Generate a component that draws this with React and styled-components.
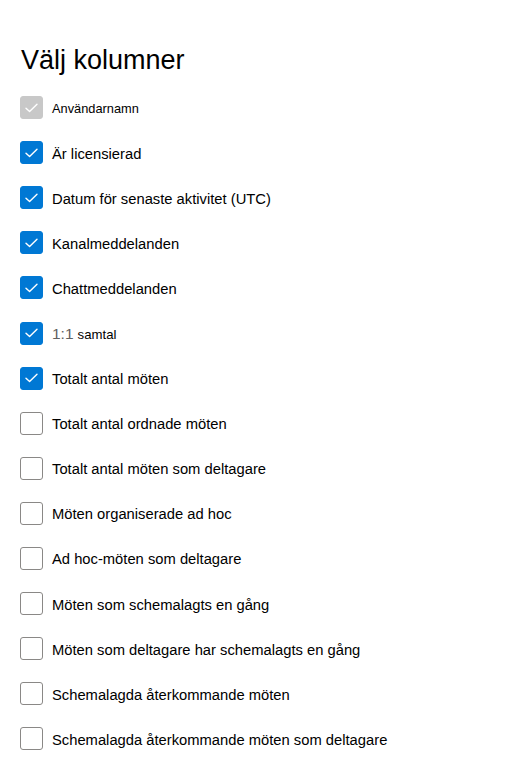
import React from "react";
import styled, { createGlobalStyle } from "styled-components";

const Global = createGlobalStyle`
  html, body { margin: 0; padding: 0; background: #ffffff; }
  body { font-family: "Liberation Sans", Arial, sans-serif; color: #000; }
`;

const Panel = styled.div`
  padding: 44px 0 0 20px;
  display: flex;
  flex-direction: column;
`;

const Title = styled.h1`
  margin: 0 0 9px 1px;
  font-size: 27px;
  line-height: 32px;
  font-weight: 400;
  color: #000;
`;

const List = styled.div`
  display: flex;
  flex-direction: column;
`;

const Row = styled.label`
  height: 45.1px;
  display: flex;
  align-items: center;
  gap: 9px;
`;

const Box = styled.span`
  width: 23px;
  height: 23px;
  box-sizing: border-box;
  border-radius: 3px;
  display: flex;
  align-items: center;
  justify-content: center;
  flex-shrink: 0;
  background: ${(p) => (p.$state === "disabled" ? "#c8c8c8" : p.$state === "on" ? "#0078d4" : "#fff")};
  border: 1px solid ${(p) => (p.$state === "disabled" ? "#c8c8c8" : p.$state === "on" ? "#0078d4" : "#8a8886")};
`;

const Label = styled.span`
  font-size: ${(p) => (p.$small ? "12.8px" : "14.75px")};
  color: #000;
  white-space: nowrap;
  padding-top: 2px;
`;

const Grey = styled.span`
  color: #616161;
  font-size: 15.5px;
  margin-right: 4px;
`;

const Small = styled.span`
  font-size: 13.2px;
`;

const Check = () => (
  <svg width="13" height="10" viewBox="0 0 13 10">
    <path d="M1 5.2 L4.6 8.6 L12 1.2" fill="none" stroke="#fff" strokeWidth="1.4" strokeLinecap="round" strokeLinejoin="round" />
  </svg>
);

const items = [
  { text: "Användarnamn", state: "disabled", small: true },
  { text: "Är licensierad", state: "on" },
  { text: "Datum för senaste aktivitet (UTC)", state: "on" },
  { text: "Kanalmeddelanden", state: "on" },
  { text: "Chattmeddelanden", state: "on" },
  { text: "samtal", state: "on", prefix: "1:1" },
  { text: "Totalt antal möten", state: "on" },
  { text: "Totalt antal ordnade möten", state: "off" },
  { text: "Totalt antal möten som deltagare", state: "off" },
  { text: "Möten organiserade ad hoc", state: "off" },
  { text: "Ad hoc-möten som deltagare", state: "off" },
  { text: "Möten som schemalagts en gång", state: "off" },
  { text: "Möten som deltagare har schemalagts en gång", state: "off" },
  { text: "Schemalagda återkommande möten", state: "off" },
  { text: "Schemalagda återkommande möten som deltagare", state: "off" },
];

export default function App() {
  return (
    <>
      <Global />
      <Panel>
        <Title>Välj kolumner</Title>
        <List>
          {items.map((it) => (
            <Row key={it.text + (it.prefix || "")}>
              <Box $state={it.state}>{it.state !== "off" && <Check />}</Box>
              <Label $small={it.small}>
                {it.prefix ? (
                  <>
                    <Grey>{it.prefix}</Grey>
                    <Small>{it.text}</Small>
                  </>
                ) : (
                  it.text
                )}
              </Label>
            </Row>
          ))}
        </List>
      </Panel>
    </>
  );
}
